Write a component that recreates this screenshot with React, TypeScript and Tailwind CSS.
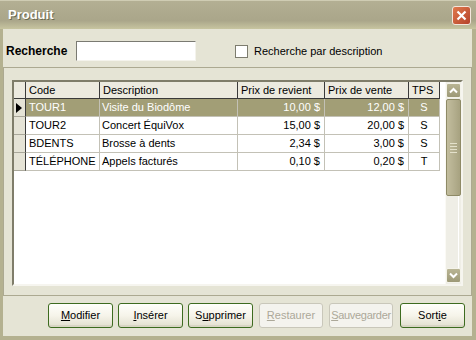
import React from 'react';

type Row = { code: string; desc: string; revient: string; vente: string; tps: string };

const rows: Row[] = [
    { code: 'TOUR1', desc: 'Visite du Biodôme', revient: '10,00 $', vente: '12,00 $', tps: 'S' },
    { code: 'TOUR2', desc: 'Concert ÉquiVox', revient: '15,00 $', vente: '20,00 $', tps: 'S' },
    { code: 'BDENTS', desc: 'Brosse à dents', revient: '2,34 $', vente: '3,00 $', tps: 'S' },
    { code: 'TÉLÉPHONE', desc: 'Appels facturés', revient: '0,10 $', vente: '0,20 $', tps: 'T' },
];

const cols = 'grid grid-cols-[12px_74px_138px_87px_84px_31px]';

const XpButton: React.FC<{ children: React.ReactNode; disabled?: boolean; className?: string }> = ({ children, disabled, className }) => (
    <button
        disabled={disabled}
        className={
            'h-[25px] rounded-[3px] border text-[11px] leading-none whitespace-nowrap ' +
            (disabled
                ? 'border-[#c9c7ba] bg-[#f4f3ee] text-[#aca899] '
                : 'border-[#3d6b1f] bg-gradient-to-b from-[#fffffb] via-[#f6f4ea] to-[#e2dfcf] text-black shadow-[inset_0_-2px_0_#d8d5c4] ') +
            (className ?? '')
        }
    >
        {children}
    </button>
);

const ScrollArrow: React.FC<{ up?: boolean }> = ({ up }) => (
    <div className="h-[15px] w-full rounded-[2px] border border-[#f4f3ea] bg-gradient-to-b from-[#b9b594] to-[#9d9977] flex items-center justify-center">
        <svg width="9" height="7" viewBox="0 0 9 7">
            <path d={up ? 'M1 5.5 L4.5 2 L8 5.5' : 'M1 1.5 L4.5 5 L8 1.5'} stroke="#fff" strokeWidth="2" fill="none" />
        </svg>
    </div>
);

export default function App() {
    return (
        <div className="w-[476px] h-[340px] bg-[#b4b190] flex flex-col font-['Liberation_Sans',Arial,sans-serif] text-black overflow-hidden">
            {/* title bar */}
            <div className="h-[29px] shrink-0 flex items-center justify-between pl-[8px] pr-[5px] bg-gradient-to-b from-[#b3af93] via-[#aaa68a] via-70% to-[#c7c5a0] border-t border-[#cfccb3]">
                <span className="text-[13px] font-bold text-white [text-shadow:1px_1px_#6b6950]">Produit</span>
                <div className="w-[19px] h-[19px] rounded-[3px] border border-[#f3e6dc] bg-gradient-to-br from-[#e07a4d] to-[#b5412a] flex items-center justify-center">
                    <svg width="11" height="11" viewBox="0 0 11 11">
                        <path d="M1.5 1.5 L9.5 9.5 M9.5 1.5 L1.5 9.5" stroke="#fff" strokeWidth="2.2" />
                    </svg>
                </div>
            </div>

            <div className="flex-1 mx-[3px] mb-[4px] mr-[4px] bg-[#e5e4d5] flex flex-col">
                {/* search row */}
                <div className="h-[38px] shrink-0 flex items-center pt-[6px]">
                    <span className="ml-[3px] text-[12px] font-bold w-[70px]">Recherche</span>
                    <div className="w-[120px] h-[20px] bg-white border border-t-[#7a7a72] border-l-[#7a7a72] border-b-[#f4f3ec] border-r-[#f4f3ec]" />
                    <div className="ml-[39px] w-[13px] h-[13px] bg-white border border-[#7d7c6e]" />
                    <span className="ml-[6px] text-[11px]">Recherche par description</span>
                </div>

                {/* grid panel */}
                <div className="h-[229px] shrink-0 border border-[#aca991] pt-[12px] px-[8px]">
                    <div className="h-[206px] bg-white border-2 border-t-[#7f7d6a] border-l-[#7f7d6a] border-b-[#f6f5ef] border-r-[#f6f5ef] flex text-[11px]">
                        <div className="w-[426px]">
                            <div className={cols + ' h-[17px] bg-[#eceadf] border-b border-[#3a3a3a]'}>
                                <div className="border-r border-[#3a3a3a]" />
                                <div className="border-r border-[#3a3a3a] pl-[3px] leading-[16px]">Code</div>
                                <div className="border-r border-[#3a3a3a] pl-[3px] leading-[16px]">Description</div>
                                <div className="border-r border-[#3a3a3a] pl-[3px] leading-[16px]">Prix de revient</div>
                                <div className="border-r border-[#3a3a3a] pl-[3px] leading-[16px]">Prix de vente</div>
                                <div className="border-r border-[#3a3a3a] pl-[3px] leading-[16px]">TPS</div>
                            </div>
                            {rows.map((r, i) => {
                                const sel = i === 0;
                                const cell = 'h-[18px] leading-[17px] border-r border-b border-[#c3c1b6] whitespace-nowrap overflow-hidden ';
                                return (
                                    <div key={r.code} className={cols + (sel ? ' bg-[#a29e76] text-white' : '')}>
                                        <div className="h-[18px] bg-[#e5e3d6] border-r border-[#3a3a3a] border-b border-b-[#a9a79a] flex items-center">
                                            {sel && (
                                                <svg width="6" height="10" viewBox="0 0 6 10" className="ml-[2px]">
                                                    <path d="M0 0 L6 5 L0 10 Z" fill="#000" />
                                                </svg>
                                            )}
                                        </div>
                                        <div className={cell + 'pl-[3px]'}>{r.code}</div>
                                        <div className={cell + 'pl-[2px]'}>{r.desc}</div>
                                        <div className={cell + 'text-right pr-[4px]'}>{r.revient}</div>
                                        <div className={cell + 'text-right pr-[4px]'}>{r.vente}</div>
                                        <div className={cell + 'text-center'}>{r.tps}</div>
                                    </div>
                                );
                            })}
                        </div>
                        <div className="ml-auto w-[16px] py-[1px] flex flex-col bg-[#efeee6] border-l border-[#fbfaf5]">
                            <ScrollArrow up />
                            <div className="h-[97px] mt-[1px] rounded-[2px] border border-[#8e8a66] bg-gradient-to-r from-[#c2bd9d] via-[#b5b090] to-[#a7a280] flex flex-col items-center justify-center gap-[2px]">
                                <div className="w-[7px] h-[1px] bg-[#e4e1cb]" />
                                <div className="w-[7px] h-[1px] bg-[#e4e1cb]" />
                                <div className="w-[7px] h-[1px] bg-[#e4e1cb]" />
                                <div className="w-[7px] h-[1px] bg-[#e4e1cb]" />
                            </div>
                            <div className="flex-1 mx-[2px] border-r border-[#ffffff]" />
                            <ScrollArrow />
                        </div>
                    </div>
                </div>

                {/* buttons */}
                <div className="flex-1 flex items-start justify-end pt-[7px] pr-[7px]">
                    <XpButton className="w-[65px]"><u>M</u>odifier</XpButton>
                    <XpButton className="w-[65px] ml-[5px]"><u>I</u>nsérer</XpButton>
                    <XpButton className="w-[65px] ml-[5px]">S<u>u</u>pprimer</XpButton>
                    <XpButton disabled className="w-[64px] ml-[6px]"><u>R</u>estaurer</XpButton>
                    <XpButton disabled className="w-[64px] ml-[6px] tracking-[-0.3px]"><u>S</u>auvegarder</XpButton>
                    <XpButton className="w-[65px] ml-[7px]">Sort<u>i</u>e</XpButton>
                </div>
            </div>
        </div>
    );
}
